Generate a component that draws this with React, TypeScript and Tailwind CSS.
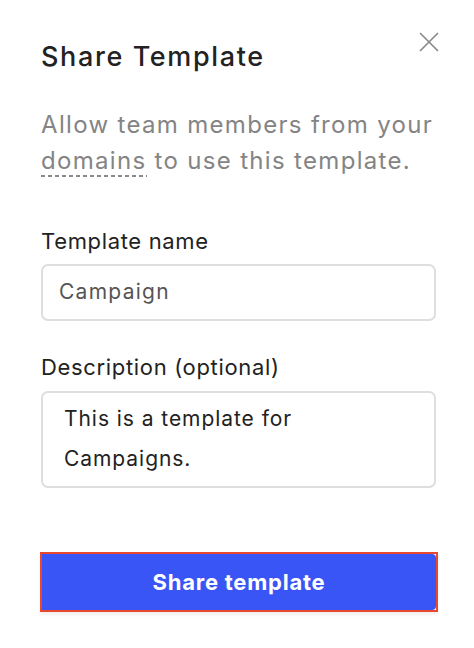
import React from "react";

export default function App() {
  return (
    <div className="w-[474px] h-[648px] bg-white relative" style={{ fontFamily: "Inter, 'Open Sans', sans-serif" }}>
      <button className="absolute left-[418px] top-[31px] w-[22px] h-[22px] text-[#8a8a8a]">
        <svg viewBox="0 0 22 22" width="22" height="22" fill="none" stroke="currentColor" strokeWidth="1.7">
          <path d="M2 2 L20 20 M20 2 L2 20" />
        </svg>
      </button>
      <div className="pl-[41px] pr-[30px] pt-[40px]">
        <h2 className="text-[27px] leading-[34px] text-[#222] font-medium tracking-[0.06em]">Share Template</h2>
        <p className="mt-[33px] text-[24px] leading-[36px] text-[#848484] tracking-[0.055em] whitespace-nowrap">
          Allow team members from your
          <br />
          <span className="pb-[2px] bg-[linear-gradient(to_right,#8a8a8a_62%,transparent_62%)] bg-[length:7px_2px] bg-repeat-x bg-[position:0_100%]">domains</span> to use this template.
        </p>
        <label className="block mt-[48px] text-[22px] leading-[28px] text-[#222] tracking-[0.03em]">Template name</label>
        <div className="mt-[9px] w-[395px] h-[57px] border-2 border-[#dedede] rounded-[7px] flex items-center px-[16px] pb-[2px] text-[21px] leading-[28px] text-[#555] tracking-[0.06em]">
          Campaign
        </div>
        <label className="block mt-[32px] text-[22px] leading-[28px] text-[#222] tracking-[0.03em]">Description (optional)</label>
        <div className="mt-[10px] w-[395px] h-[97px] border-2 border-[#dedede] rounded-[7px] pl-[21px] pt-[6px] text-[21px] leading-[40px] text-[#222] tracking-[0.045em]">
          This is a template for
          <br />
          Campaigns.
        </div>
        <div className="mt-[64px] -ml-px w-[398px] h-[60px] border-2 border-[#e8492e] shadow-[0_3px_3px_rgba(0,0,0,0.06)]">
          <button className="w-full h-full bg-[#3a55f5] rounded-r-[4px] text-white text-[22px] font-bold tracking-[0.035em] flex items-center justify-center">
            Share template
          </button>
        </div>
      </div>
    </div>
  );
}
